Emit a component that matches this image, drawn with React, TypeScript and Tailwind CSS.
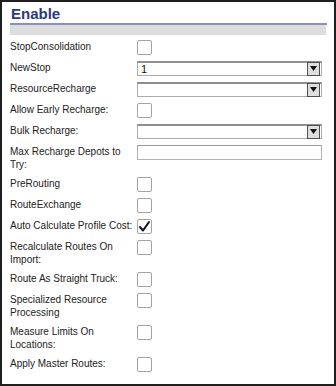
import React from "react";

type Row =
  | { label: string; kind: "check"; checked?: boolean }
  | { label: string; kind: "select"; value?: string }
  | { label: string; kind: "text" };

const rows: Row[] = [
  { label: "StopConsolidation", kind: "check" },
  { label: "NewStop", kind: "select", value: "1" },
  { label: "ResourceRecharge", kind: "select" },
  { label: "Allow Early Recharge:", kind: "check" },
  { label: "Bulk Recharge:", kind: "select" },
  { label: "Max Recharge Depots to Try:", kind: "text" },
  { label: "PreRouting", kind: "check" },
  { label: "RouteExchange", kind: "check" },
  { label: "Auto Calculate Profile Cost:", kind: "check", checked: true },
  { label: "Recalculate Routes On Import:", kind: "check" },
  { label: "Route As Straight Truck:", kind: "check" },
  { label: "Specialized Resource Processing", kind: "check" },
  { label: "Measure Limits On Locations:", kind: "check" },
  { label: "Apply Master Routes:", kind: "check" },
];

function Check({ checked }: { checked?: boolean }) {
  return (
    <div className="w-[15px] h-[15px] border border-[#a3a3a3] rounded-[2px] bg-white flex items-center justify-center">
      {checked && (
        <svg width="13" height="13" viewBox="0 0 13 13">
          <path d="M2 7 L5 10.5 L11 2" fill="none" stroke="#111" strokeWidth="2" strokeLinecap="round" strokeLinejoin="round" />
        </svg>
      )}
    </div>
  );
}

function Select({ value }: { value?: string }) {
  return (
    <div className="w-[185px] h-[15px] border border-[#ababab] border-t-[#8f8f8f] border-t-2 bg-white flex items-center justify-between">
      <span className="pl-[3px] text-[11px] leading-[12px] text-[#111]">{value ?? ""}</span>
      <div className="w-[13px] h-[14px] -mt-[1px] border border-[#505050] bg-[#dedede] flex items-center justify-center mr-[1px]">
        <svg width="7" height="5" viewBox="0 0 7 5">
          <path d="M0 0 L7 0 L3.5 5 Z" fill="#111" />
        </svg>
      </div>
    </div>
  );
}

function TextBox() {
  return <div className="w-[185px] h-[15px] border border-[#b3b3b3] border-t-[#9a9a9a] bg-white" />;
}

export default function App() {
  return (
    <div
      className="w-[336px] h-[386px] border-2 border-[#1e1e1e] bg-white pl-[8px] pr-[7px] overflow-hidden"
      style={{ fontFamily: '"Liberation Sans", Arial, sans-serif' }}
    >
      <div className="pt-[3px]">
        <div className="text-[15px] leading-[18px] font-bold text-[#2b3886] pl-[1px]">Enable</div>
        <div className="h-[2px] bg-[#8a90bd]" />
        <div className="h-[10px] bg-[#dddddd] mr-[1px]" />
      </div>
      <div className="pt-[2px]">
        {rows.map((r, i) => (
          <div key={i} className="flex items-start py-[3px]">
            <div className="w-[127px] text-[10px] leading-[13px] text-[#222] pr-[2px]">{r.label}</div>
            {r.kind === "check" && <Check checked={r.checked} />}
            {r.kind === "select" && <Select value={r.value} />}
            {r.kind === "text" && <TextBox />}
          </div>
        ))}
      </div>
    </div>
  );
}
